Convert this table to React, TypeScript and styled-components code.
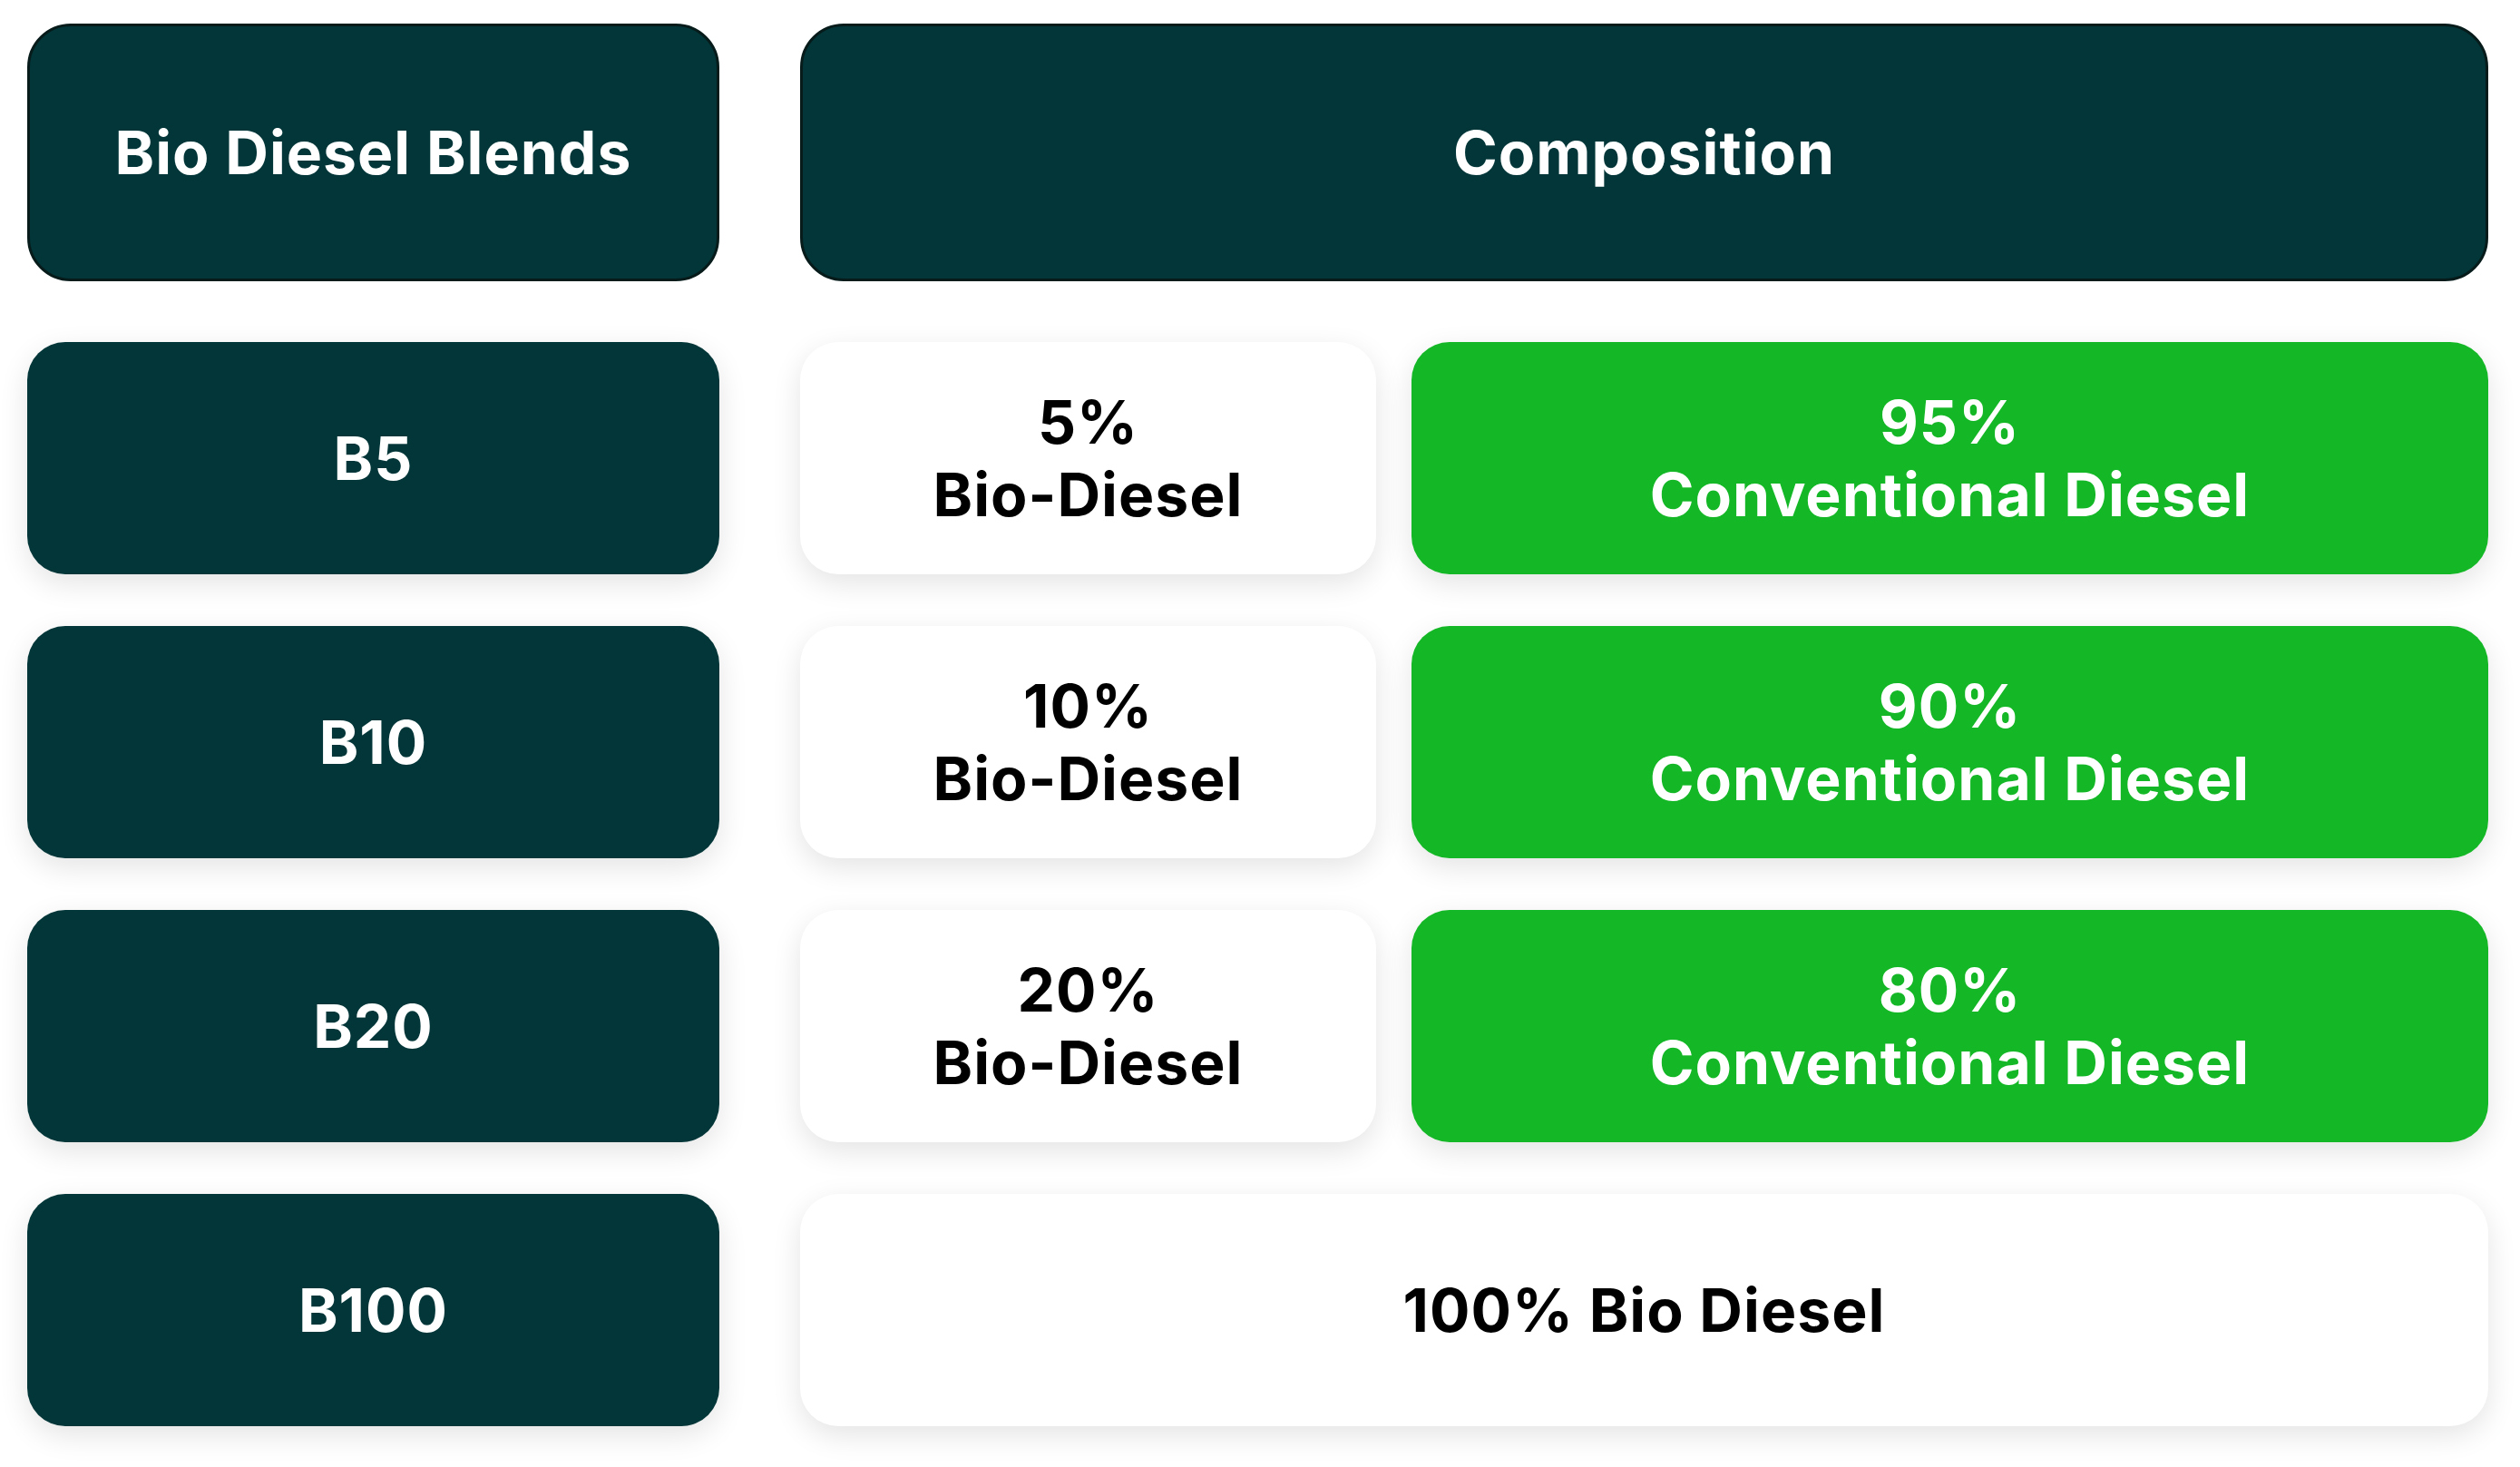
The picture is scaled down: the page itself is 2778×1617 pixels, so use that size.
import React from "react";
import styled, { createGlobalStyle } from "styled-components";

const Global = createGlobalStyle`
  html, body { margin: 0; padding: 0; background: #ffffff; }
  body { font-family: Inter, "Noto Sans", Roboto, sans-serif; }
`;

const Page = styled.div`
  width: 2778px;
  height: 1617px;
  box-sizing: border-box;
  padding: 26px 35px 0 30px;
  display: grid;
  grid-template-columns: 763px 1fr;
  column-gap: 89px;
  row-gap: 57px;
  grid-template-rows: 294px repeat(4, 256px);
  background: #ffffff;
`;

const HeaderCell = styled.div`
  box-sizing: border-box;
  align-self: start;
  height: 284px;
  background: #023638;
  border: 3px solid #071b1b;
  border-radius: 48px;
  display: flex;
  align-items: center;
  justify-content: center;
  color: #ffffff;
  font-weight: 700;
  font-size: 66px;
  letter-spacing: 1px;
`;

type Tone = "dark" | "light" | "green";

const tones: Record<Tone, { bg: string; fg: string }> = {
  dark: { bg: "#023638", fg: "#ffffff" },
  light: { bg: "#ffffff", fg: "#000000" },
  green: { bg: "#14b826", fg: "#ffffff" },
};

const Card = styled.div<{ $tone: Tone }>`
  box-sizing: border-box;
  height: 256px;
  border-radius: 42px;
  background: ${(p) => tones[p.$tone].bg};
  color: ${(p) => tones[p.$tone].fg};
  box-shadow: 0 10px 32px rgba(0, 0, 0, 0.11);
  display: flex;
  flex-direction: column;
  align-items: center;
  justify-content: center;
  text-align: center;
  font-weight: 700;
  font-size: 66px;
  letter-spacing: 1px;
  line-height: 80px;
`;

const SplitRow = styled.div`
  display: grid;
  grid-template-columns: 635px 1fr;
  column-gap: 39px;
`;

const rows = [
  { blend: "B5", bio: "5%", conv: "95%" },
  { blend: "B10", bio: "10%", conv: "90%" },
  { blend: "B20", bio: "20%", conv: "80%" },
];

export default function App() {
  return (
    <>
      <Global />
      <Page>
        <HeaderCell>Bio Diesel Blends</HeaderCell>
        <HeaderCell>Composition</HeaderCell>
        {rows.map((r) => (
          <React.Fragment key={r.blend}>
            <Card $tone="dark">{r.blend}</Card>
            <SplitRow>
              <Card $tone="light">
                <span>{r.bio}</span>
                <span>Bio-Diesel</span>
              </Card>
              <Card $tone="green">
                <span>{r.conv}</span>
                <span>Conventional Diesel</span>
              </Card>
            </SplitRow>
          </React.Fragment>
        ))}
        <Card $tone="dark">B100</Card>
        <Card $tone="light">100% Bio Diesel</Card>
      </Page>
    </>
  );
}
